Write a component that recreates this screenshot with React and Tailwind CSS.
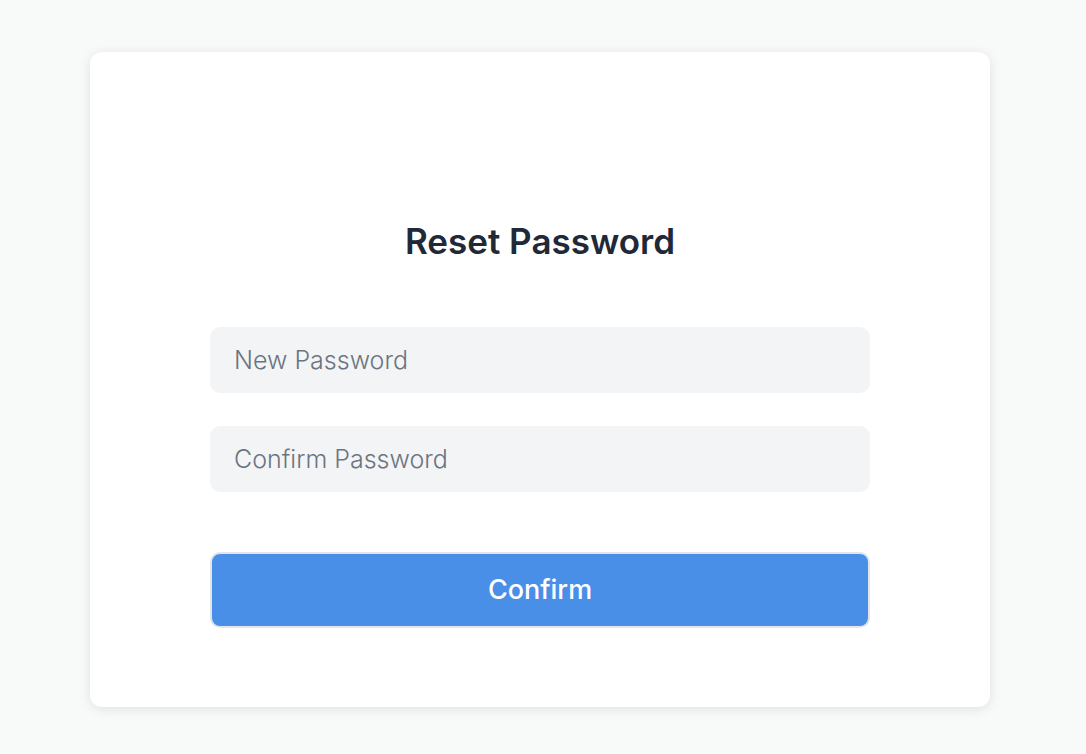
export default function App() {
  return (
    <div className="min-h-screen bg-[#f8f9f9] pt-[52px] pl-[90px]" style={{ fontFamily: "Inter, 'Noto Sans', sans-serif" }}>
      <div className="w-[900px] h-[655px] bg-white rounded-[12px] shadow-[0_2px_12px_rgba(0,0,0,0.1)] px-[120px] pt-[168px]">
        <h1 className="text-center text-[35px] leading-[42px] font-semibold text-[#1f2937]">Reset Password</h1>
        <div className="mt-[65px] flex flex-col gap-[33px]">
          <input
            type="password"
            placeholder="New Password"
            className="h-[66px] w-full rounded-[10px] bg-[#f3f4f6] px-[24px] text-[25px] font-light outline-none placeholder:text-[#6b7580]"
          />
          <input
            type="password"
            placeholder="Confirm Password"
            className="h-[66px] w-full rounded-[10px] bg-[#f3f4f6] px-[24px] text-[25px] font-light outline-none placeholder:text-[#6b7580]"
          />
        </div>
        <button className="mt-[60px] h-[76px] w-full rounded-[10px] bg-[#4a8fe7] border-2 border-[#e3e5e8] text-white text-[27px] font-medium">
          Confirm
        </button>
      </div>
    </div>
  );
}
